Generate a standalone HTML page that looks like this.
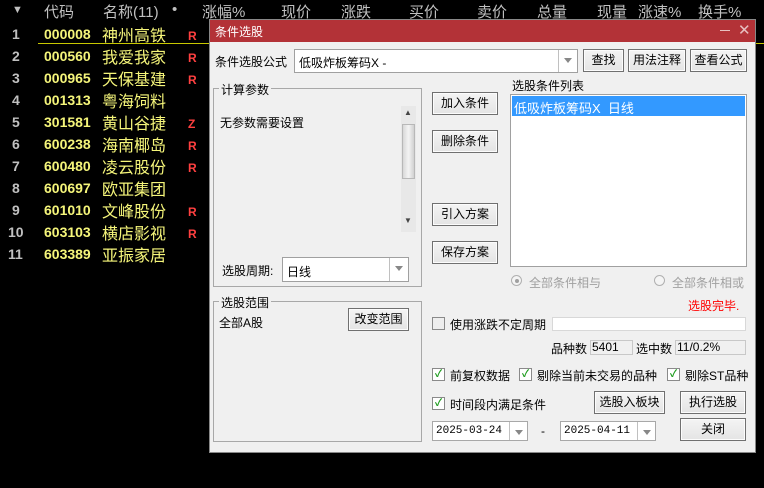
<!DOCTYPE html>
<html><head><meta charset="utf-8"><style>
*{margin:0;padding:0;box-sizing:border-box}
body{width:764px;height:488px;background:#000;position:relative;overflow:hidden;font-family:"Liberation Sans","Noto Sans CJK SC",sans-serif;font-size:12px}
.a{position:absolute;white-space:nowrap}
.h{color:#c0c0c0;font-size:15px;top:1px}
.n{color:#c0c0c0;font-size:14px;font-weight:bold;left:12px}
.c{color:#f5f57a;font-size:14px;font-weight:bold;left:44px}
.m{color:#f5f57a;font-size:16px;left:102px}
.r{color:#ff4040;font-size:12px;font-weight:bold;left:188px}
.btn{position:absolute;border:1px solid #707070;background:linear-gradient(#f4f4f4,#e4e4e4);text-align:center;font-size:12px;color:#000;box-shadow:inset 0 0 0 1px #fcfcfc}
.box{position:absolute;background:#fff;border:1px solid #a0a0a0}
.grp{position:absolute;border:1px solid #a8a8a8}
.lab{position:absolute;background:#f0f0f0;padding:0 2px;font-size:12px;white-space:nowrap}
.dd{position:absolute;right:0;top:0;bottom:0;width:19px;border-left:1px solid #c0c0c0}
.dd:after{content:"";position:absolute;left:5px;top:8px;border:4px solid transparent;border-top:5px solid #888}
.cb{position:absolute;width:13px;height:13px;border:1px solid #8a8a8a;background:#fff;color:#1a9a1a;font-size:10px;line-height:11px;text-align:center;font-weight:bold}
.t{position:absolute;white-space:nowrap;font-size:12px;color:#000}
</style></head><body>
<div class="a h" style="left:12px;font-size:11px;top:4px">▼</div>
<div class="a h" style="left:44px">代码</div>
<div class="a h" style="left:103px">名称(11)</div>
<div class="a h" style="left:172px">•</div>
<div class="a h" style="left:202px">涨幅%</div>
<div class="a h" style="left:281px">现价</div>
<div class="a h" style="left:341px">涨跌</div>
<div class="a h" style="left:409px">买价</div>
<div class="a h" style="left:477px">卖价</div>
<div class="a h" style="left:537px">总量</div>
<div class="a h" style="left:597px">现量</div>
<div class="a h" style="left:638px">涨速%</div>
<div class="a h" style="left:698px">换手%</div>
<div class="a" style="left:38px;top:43px;width:726px;height:1px;background:#c8c800"></div>

<div class="a n" style="top:26px">1</div><div class="a c" style="top:26px">000008</div><div class="a m" style="top:22px">神州高铁</div><div class="a r" style="top:29px">R</div>
<div class="a n" style="top:48px">2</div><div class="a c" style="top:48px">000560</div><div class="a m" style="top:44px">我爱我家</div><div class="a r" style="top:51px">R</div>
<div class="a n" style="top:70px">3</div><div class="a c" style="top:70px">000965</div><div class="a m" style="top:66px">天保基建</div><div class="a r" style="top:73px">R</div>
<div class="a n" style="top:92px">4</div><div class="a c" style="top:92px">001313</div><div class="a m" style="top:88px">粤海饲料</div>
<div class="a n" style="top:114px">5</div><div class="a c" style="top:114px">301581</div><div class="a m" style="top:110px">黄山谷捷</div><div class="a r" style="top:117px">Z</div>
<div class="a n" style="top:136px">6</div><div class="a c" style="top:136px">600238</div><div class="a m" style="top:132px">海南椰岛</div><div class="a r" style="top:139px">R</div>
<div class="a n" style="top:158px">7</div><div class="a c" style="top:158px">600480</div><div class="a m" style="top:154px">凌云股份</div><div class="a r" style="top:161px">R</div>
<div class="a n" style="top:180px">8</div><div class="a c" style="top:180px">600697</div><div class="a m" style="top:176px">欧亚集团</div>
<div class="a n" style="top:202px">9</div><div class="a c" style="top:202px">601010</div><div class="a m" style="top:198px">文峰股份</div><div class="a r" style="top:205px">R</div>
<div class="a n" style="top:224px;left:8px">10</div><div class="a c" style="top:224px">603103</div><div class="a m" style="top:220px">横店影视</div><div class="a r" style="top:227px">R</div>
<div class="a n" style="top:246px;left:8px">11</div><div class="a c" style="top:246px">603389</div><div class="a m" style="top:242px">亚振家居</div>

<!-- dialog -->
<div class="a" style="left:209px;top:19px;width:547px;height:434px;background:#f0f0f0;border:1px solid #888">
<div class="a" style="left:0;top:0;width:545px;height:22px;background:#b33237"></div>
<div class="t" style="left:5px;top:3px;color:#fff;font-size:12px">条件选股</div>
<div class="a" style="left:510px;top:10px;width:10px;height:1px;background:#e8c0c0"></div>
<div class="t" style="left:528px;top:1px;color:#e8c0c0;font-size:15px">✕</div>
</div>
<div class="t" style="left:215px;top:53px">条件选股公式</div>
<div class="box" style="left:294px;top:49px;width:284px;height:24px"><span class="t" style="left:4px;top:4px">低吸炸板筹码X -</span><div class="dd"></div></div>
<div class="btn" style="left:583px;top:49px;width:41px;height:23px;line-height:21px">查找</div>
<div class="btn" style="left:628px;top:49px;width:58px;height:23px;line-height:21px">用法注释</div>
<div class="btn" style="left:690px;top:49px;width:57px;height:23px;line-height:21px">查看公式</div>

<div class="grp" style="left:213px;top:88px;width:209px;height:199px"></div>
<div class="lab" style="left:219px;top:81px">计算参数</div>
<div class="a" style="left:218px;top:106px;width:199px;height:126px;background:#f0f0f0"></div>
<div class="t" style="left:220px;top:114px">无参数需要设置</div>
<div class="a" style="left:401px;top:106px;width:15px;height:126px;background:#e8e8e8"></div>
<div class="a" style="left:402px;top:124px;width:13px;height:55px;background:linear-gradient(90deg,#d8d8d8,#f4f4f4,#d0d0d0);border:1px solid #b8b8b8"></div>
<div class="t" style="left:404px;top:108px;font-size:8px;color:#444">▲</div>
<div class="t" style="left:404px;top:216px;font-size:8px;color:#444">▼</div>
<div class="t" style="left:222px;top:262px">选股周期:</div>
<div class="box" style="left:282px;top:257px;width:127px;height:25px"><span class="t" style="left:4px;top:5px">日线</span><div class="dd"></div></div>

<div class="grp" style="left:213px;top:301px;width:209px;height:141px"></div>
<div class="lab" style="left:219px;top:294px">选股范围</div>
<div class="t" style="left:219px;top:314px">全部A股</div>
<div class="btn" style="left:348px;top:308px;width:61px;height:23px;line-height:21px">改变范围</div>

<div class="btn" style="left:432px;top:92px;width:66px;height:23px;line-height:21px">加入条件</div>
<div class="btn" style="left:432px;top:130px;width:66px;height:23px;line-height:21px">删除条件</div>
<div class="btn" style="left:432px;top:203px;width:66px;height:23px;line-height:21px">引入方案</div>
<div class="btn" style="left:432px;top:241px;width:66px;height:23px;line-height:21px">保存方案</div>

<div class="t" style="left:512px;top:77px">选股条件列表</div>
<div class="box" style="left:510px;top:94px;width:237px;height:173px"></div>
<div class="a" style="left:512px;top:96px;width:233px;height:20px;background:#3399ff"></div>
<div class="t" style="left:514px;top:98px;color:#fff;font-size:13px">低吸炸板筹码X&nbsp; 日线</div>

<div class="a" style="left:511px;top:275px;width:11px;height:11px;border-radius:50%;border:1px solid #b0b0b0;background:#f4f4f4"></div>
<div class="a" style="left:515px;top:279px;width:4px;height:4px;border-radius:50%;background:#a0a0a0"></div>
<div class="t" style="left:529px;top:274px;color:#a0a0a0">全部条件相与</div>
<div class="a" style="left:654px;top:275px;width:11px;height:11px;border-radius:50%;border:1px solid #b0b0b0;background:#f4f4f4"></div>
<div class="t" style="left:672px;top:274px;color:#a0a0a0">全部条件相或</div>
<div class="t" style="left:688px;top:297px;color:#f00">选股完毕.</div>

<div class="cb" style="left:432px;top:317px;background:#eee"></div>
<div class="t" style="left:450px;top:316px">使用涨跌不定周期</div>
<div class="box" style="left:552px;top:317px;width:194px;height:14px;border-color:#d8d8d8"></div>
<div class="t" style="left:551px;top:340px">品种数</div>
<div class="a" style="left:590px;top:340px;width:43px;height:15px;border:1px solid #c8c8c8"></div>
<div class="t" style="left:592px;top:340px">5401</div>
<div class="t" style="left:636px;top:340px">选中数</div>
<div class="a" style="left:675px;top:340px;width:71px;height:15px;border:1px solid #c8c8c8"></div>
<div class="t" style="left:677px;top:340px">11/0.2%</div>

<div class="cb" style="left:432px;top:368px">✓</div><div class="t" style="left:450px;top:367px">前复权数据</div>
<div class="cb" style="left:519px;top:368px">✓</div><div class="t" style="left:537px;top:367px">剔除当前未交易的品种</div>
<div class="cb" style="left:667px;top:368px">✓</div><div class="t" style="left:685px;top:367px">剔除ST品种</div>
<div class="cb" style="left:432px;top:397px">✓</div><div class="t" style="left:450px;top:396px">时间段内满足条件</div>
<div class="btn" style="left:594px;top:391px;width:71px;height:23px;line-height:21px">选股入板块</div>
<div class="btn" style="left:680px;top:391px;width:66px;height:23px;line-height:21px">执行选股</div>
<div class="box" style="left:432px;top:421px;width:96px;height:20px;border-color:#a8a8a8"><span class="t" style="left:3px;top:3px;font-family:'Liberation Mono',monospace;font-size:11px">2025-03-24</span><div class="dd" style="width:18px"></div></div>
<div class="t" style="left:541px;top:424px">-</div>
<div class="box" style="left:560px;top:421px;width:96px;height:20px;border-color:#a8a8a8"><span class="t" style="left:3px;top:3px;font-family:'Liberation Mono',monospace;font-size:11px">2025-04-11</span><div class="dd" style="width:18px"></div></div>
<div class="btn" style="left:680px;top:418px;width:66px;height:23px;line-height:21px">关闭</div>
</body></html>
